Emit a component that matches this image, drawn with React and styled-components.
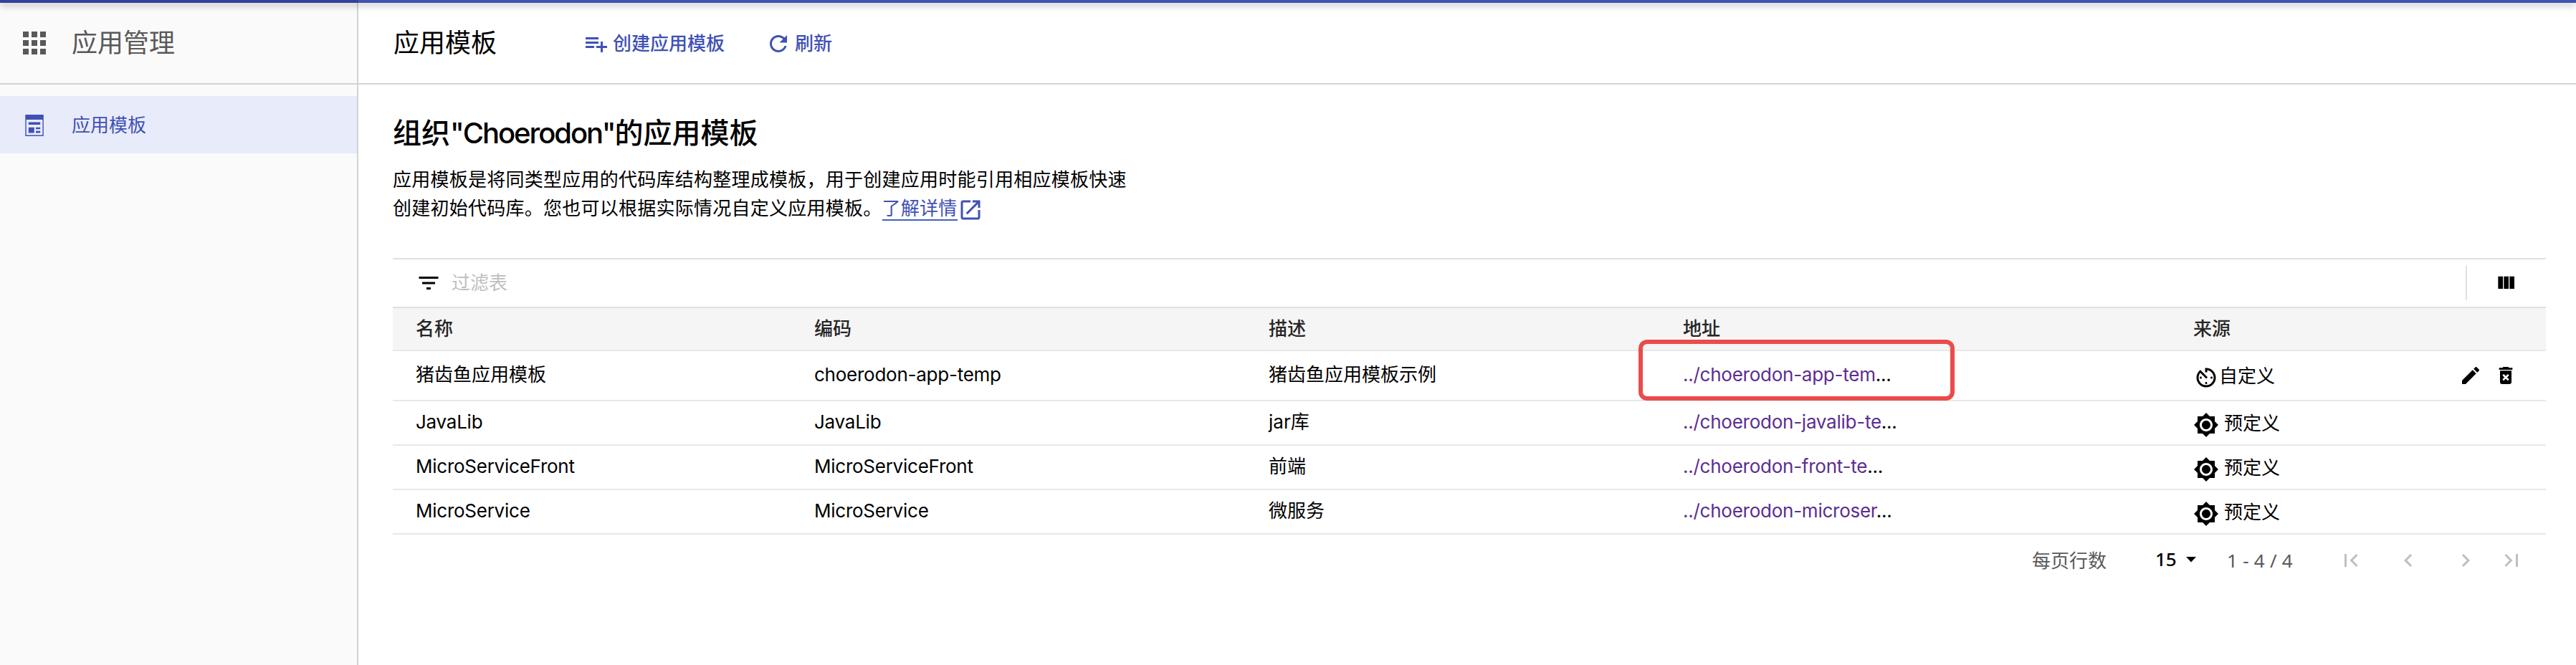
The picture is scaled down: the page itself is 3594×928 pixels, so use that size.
import React from 'react';
import styled, { createGlobalStyle } from 'styled-components';

const Global = createGlobalStyle`
  * { box-sizing: border-box; }
  html, body { margin: 0; padding: 0; background: #fff; }
  body {
    font-family: Inter, "Noto Sans CJK SC", sans-serif;
    font-size: 26px;
    line-height: 40px;
    color: #000;
    overflow: hidden;
  }
`;

const Page = styled.div`
  height: 928px;
  display: flex;
  flex-direction: column;
`;

const TopBar = styled.div`
  position: relative;
  z-index: 2;
  flex: none;
  height: 4px;
  background: linear-gradient(to right, #32419b 500px, #4052b0 500px);
  box-shadow: 0 4px 8px rgba(0, 0, 0, 0.3);
`;

const Body = styled.div`
  flex: 1;
  display: flex;
  min-height: 0;
`;

const Sidebar = styled.aside`
  width: 500px;
  flex: none;
  background: #fafafa;
  border-right: 2px solid #d3d3d3;
`;

const SidebarHeader = styled.div`
  height: 114px;
  padding-left: 24px;
  border-bottom: 2px solid #d3d3d3;
  display: flex;
  align-items: center;
  gap: 28px;
  font-size: 36px;
  color: #595959;
`;

const SidebarItem = styled.div`
  margin-top: 16px;
  height: 80px;
  padding: 2px 0 0 30px;
  background: #e8ebfa;
  color: #3f51b5;
  display: flex;
  align-items: center;
  gap: 34px;
`;

const Main = styled.main`
  flex: 1;
  min-width: 0;
`;

const PageHeader = styled.header`
  height: 114px;
  padding-left: 49px;
  border-bottom: 2px solid #d3d3d3;
  display: flex;
  align-items: center;
`;

const PageTitle = styled.h1`
  margin: 0 119px 0 0;
  width: 146px;
  white-space: nowrap;
  font-size: 36px;
  font-weight: 400;
`;

const HeaderButton = styled.button`
  border: 0;
  padding: 2px 0 0;
  margin-right: 57px;
  background: none;
  font: inherit;
  font-weight: 500;
  color: #3f51b5;
  display: flex;
  align-items: center;
  gap: 5px;
`;

const Content = styled.section`
  padding: 38px 42px 0 48px;
`;

const Heading = styled.h2`
  margin: 0;
  font-size: 40px;
  line-height: 60px;
  font-weight: 500;
`;

const HeadingLatin = styled.span`
  letter-spacing: -2.05px;
`;

const Description = styled.p`
  margin: 15px 0 0;
  letter-spacing: 0.25px;
`;

const Line = styled.span`
  display: flex;
  height: 40px;
`;

const LearnMore = styled.a`
  display: flex;
  color: #3f51b5;
`;

const LearnMoreText = styled.span`
  height: 37px;
  width: 105px;
  border-bottom: 2px solid #3f62bd;
`;

const LinkIcon = styled.span`
  padding-top: 4px;
`;

const FilterBar = styled.div`
  margin-top: 49px;
  height: 68px;
  border-top: 2px solid #e0e0e0;
  padding: 0 40px 0 32px;
  display: flex;
  align-items: center;
`;

const FilterPlaceholder = styled.span`
  flex: 1;
  margin-left: 14px;
  color: #bfbfbf;
`;

const ColumnButton = styled.span`
  height: 48px;
  padding-left: 38px;
  border-left: 2px solid #e0e0e0;
  display: flex;
  align-items: center;
`;

const Row = styled.div`
  display: grid;
  grid-template-columns: 556px 634px 578px 712px 1fr;
  height: ${(p) => p.$height || 62}px;
  border-bottom: 2px solid #e8e8e8;
  align-items: center;
`;

const HeadRow = styled(Row)`
  height: 62px;
  border-top: 2px solid #e0e0e0;
  background: #f5f5f5;
  color: #262626;
  font-weight: 500;
`;

const Cell = styled.div`
  padding-left: 32px;
  white-space: nowrap;
  display: flex;
  align-items: center;
`;

const TextCell = styled(Cell)`
  padding-bottom: 2px;
`;

const AddressCell = styled(TextCell)`
  position: relative;
`;

const Latin = styled.span`
  letter-spacing: -0.25px;
`;

const RepoLink = styled.a`
  color: #5c2d91;
`;

const Highlight = styled.span`
  position: absolute;
  left: -30px;
  top: -29px;
  width: 441px;
  height: 85px;
  border: 6px solid #ea4c4c;
  border-radius: 12px;
`;

const Source = styled.span`
  display: flex;
  align-items: center;
  gap: ${(p) => (p.$custom ? 0 : 7)}px;
`;

const SourceLabel = styled.span`
  padding-top: 1px;
`;

const SourceIcon = styled.span`
  display: flex;
  padding-top: 5px;
`;

const Actions = styled.span`
  flex: 1;
  display: flex;
  justify-content: flex-end;
  gap: 17px;
  padding-right: 40px;
`;

const Pagination = styled.footer`
  margin-top: 16px;
  height: 40px;
  padding-right: 30px;
  display: flex;
  align-items: center;
  justify-content: flex-end;
  font-family: "Noto Sans", "Noto Sans CJK SC", sans-serif;
  color: #595959;
`;

const PageSize = styled.span`
  width: 100px;
  height: 37px;
  line-height: 37px;
  margin: 0 0 3px 68px;
  display: flex;
  align-items: center;
  gap: 13px;
  color: #000;
  font-weight: 500;
`;

const PageRange = styled.span`
  width: 155px;
  white-space: nowrap;
  word-spacing: 0.5px;
`;

const Pager = styled.span`
  display: flex;
  margin-right: ${(p) => p.$gap || 0}px;
  color: #bfbfbf;
`;

const Svg = styled.svg`
  display: block;
  flex: none;
  fill: currentColor;
`;

const paths = {
  apps: 'M4 8h4V4H4v4zm6 12h4v-4h-4v4zm-6 0h4v-4H4v4zm0-6h4v-4H4v4zm6 0h4v-4h-4v4zm6-10v4h4V4h-4zm-6 4h4V4h-4v4zm6 6h4v-4h-4v4zm0 6h4v-4h-4v4z',
  playlistAdd: 'M14 10H2v2h12v-2zm0-4H2v2h12V6zm4 8v-4h-2v4h-4v2h4v4h2v-4h4v-2h-4zM2 16h8v-2H2v2z',
  refresh: 'M17.65 6.35C16.2 4.9 14.21 4 12 4c-4.42 0-7.99 3.58-7.99 8s3.57 8 7.99 8c3.73 0 6.84-2.55 7.73-6h-2.08c-.82 2.33-3.04 4-5.65 4-3.31 0-6-2.69-6-6s2.69-6 6-6c1.66 0 3.14.69 4.22 1.78L13 11h7V4l-2.35 2.35z',
  openInNew: 'M19 19H5V5h7V3H5c-1.11 0-2 .9-2 2v14c0 1.1.89 2 2 2h14c1.1 0 2-.9 2-2v-7h-2v7zM14 3v2h3.59l-9.83 9.83 1.41 1.41L19 6.41V10h2V3h-7z',
  filter: 'M10 18h4v-2h-4v2zM3 6v2h18V6H3zm3 7h12v-2H6v2z',
  columns: 'M10 18h5V5h-5v13zm-6 0h5V5H4v13zM16 5v13h5V5h-5z',
  timer: 'M11 17c0 .55.45 1 1 1s1-.45 1-1-.45-1-1-1-1 .45-1 1zm0-14v4h2V5.08c3.39.49 6 3.39 6 6.92 0 3.87-3.13 7-7 7s-7-3.13-7-7c0-1.68.59-3.22 1.58-4.42L12 13l1.41-1.41-6.8-6.8v.02C4.42 6.45 3 9.05 3 12c0 4.97 4.02 9 9 9 4.97 0 9-4.03 9-9s-4.03-9-9-9h-1zm7 9c0-.55-.45-1-1-1s-1 .45-1 1 .45 1 1 1 1-.45 1-1zM6 12c0 .55.45 1 1 1s1-.45 1-1-.45-1-1-1-1 .45-1 1z',
  brightness: 'M20 8.69V4h-4.69L12 .69 8.69 4H4v4.69L.69 12 4 15.31V20h4.69L12 23.31 15.31 20H20v-4.69L23.31 12 20 8.69zM12 18c-3.31 0-6-2.69-6-6s2.69-6 6-6 6 2.69 6 6-2.69 6-6 6zm0-10c-2.21 0-4 1.79-4 4s1.79 4 4 4 4-1.79 4-4-1.79-4-4-4z',
  edit: 'M3 17.25V21h3.75L17.81 9.94l-3.75-3.75L3 17.25zM20.71 7.04c.39-.39.39-1.02 0-1.41l-2.34-2.34c-.39-.39-1.02-.39-1.41 0l-1.83 1.83 3.75 3.75 1.83-1.83z',
  remove: 'M6 19c0 1.1.9 2 2 2h8c1.1 0 2-.9 2-2V7H6v12zm2.46-7.12l1.41-1.41L12 12.59l2.12-2.12 1.41 1.41L13.41 14l2.12 2.12-1.41 1.41L12 15.41l-2.12 2.12-1.41-1.41L10.59 14l-2.13-2.12zM15.5 4l-1-1h-5l-1 1H5v2h14V4z',
  first: 'M18.41 16.59L13.82 12l4.59-4.59L17 6l-6 6 6 6zM6 6h2v12H6z',
  prev: 'M15.41 7.41L14 6l-6 6 6 6 1.41-1.41L10.83 12z',
  next: 'M10 6L8.59 7.41 13.17 12l-4.58 4.59L10 18l6-6z',
  last: 'M5.59 7.41L10.18 12l-4.59 4.59L7 18l6-6-6-6zM16 6h2v12h-2z',
};

const Icon = ({ name, size = 36 }) => (
  <Svg width={size} height={size} viewBox="0 0 24 24">
    <path d={paths[name]} />
  </Svg>
);

const TemplateIcon = () => (
  <Svg width="36" height="36" viewBox="0 0 36 36">
    <path fillRule="evenodd" d="M5.3 3h25.5v30H5.3zM6.7 10v21.6h22.7V10z" />
    <path d="M9.8 13.4h16.4v3.6H9.8zM9.8 20.7h8v7.8h-8zM20 20.7h6.2v2.6H20zM20 25.7h6.2v2.8H20z" />
  </Svg>
);

const rows = [
  { name: '猪齿鱼应用模板', code: 'choerodon-app-temp', desc: '猪齿鱼应用模板示例', url: '../choerodon-app-tem', custom: true },
  { name: 'JavaLib', code: 'JavaLib', desc: 'jar库', url: '../choerodon-javalib-te' },
  { name: 'MicroServiceFront', code: 'MicroServiceFront', desc: '前端', url: '../choerodon-front-te' },
  { name: 'MicroService', code: 'MicroService', desc: '微服务', url: '../choerodon-microser' },
];

export default function App() {
  return (
    <Page>
      <Global />
      <TopBar />
      <Body>
        <Sidebar>
          <SidebarHeader>
            <Icon name="apps" size={48} />
            应用管理
          </SidebarHeader>
          <SidebarItem>
            <TemplateIcon />
            应用模板
          </SidebarItem>
        </Sidebar>
        <Main>
          <PageHeader>
            <PageTitle>应用模板</PageTitle>
            <HeaderButton>
              <Icon name="playlistAdd" />
              创建应用模板
            </HeaderButton>
            <HeaderButton>
              <Icon name="refresh" />
              刷新
            </HeaderButton>
          </PageHeader>
          <Content>
            <Heading>
              组织<HeadingLatin>"Choerodon"</HeadingLatin>的应用模板
            </Heading>
            <Description>
              <Line>应用模板是将同类型应用的代码库结构整理成模板，用于创建应用时能引用相应模板快速</Line>
              <Line>
                创建初始代码库。您也可以根据实际情况自定义应用模板。
                <LearnMore>
                  <LearnMoreText>了解详情</LearnMoreText>
                  <LinkIcon>
                    <Icon name="openInNew" />
                  </LinkIcon>
                </LearnMore>
              </Line>
            </Description>
            <FilterBar>
              <Icon name="filter" />
              <FilterPlaceholder>过滤表</FilterPlaceholder>
              <ColumnButton>
                <Icon name="columns" size={32} />
              </ColumnButton>
            </FilterBar>
            <HeadRow>
              <Cell>名称</Cell>
              <Cell>编码</Cell>
              <Cell>描述</Cell>
              <Cell>地址</Cell>
              <Cell>来源</Cell>
            </HeadRow>
            {rows.map((r) => (
              <Row key={r.name} $height={r.custom ? 70 : 62}>
                <TextCell>{r.custom ? r.name : <Latin>{r.name}</Latin>}</TextCell>
                <TextCell><Latin>{r.code}</Latin></TextCell>
                <TextCell>{r.desc}</TextCell>
                <AddressCell>
                  <Latin><RepoLink>{r.url}</RepoLink>...</Latin>
                  {r.custom && <Highlight />}
                </AddressCell>
                <Cell>
                  <Source $custom={r.custom}>
                    <SourceIcon>
                      <Icon name={r.custom ? 'timer' : 'brightness'} />
                    </SourceIcon>
                    <SourceLabel>{r.custom ? '自定义' : '预定义'}</SourceLabel>
                  </Source>
                  {r.custom && (
                    <Actions>
                      <Icon name="edit" size={32} />
                      <Icon name="remove" size={32} />
                    </Actions>
                  )}
                </Cell>
              </Row>
            ))}
            <Pagination>
              每页行数
              <PageSize>
                15
                <Svg width="14" height="8" viewBox="0 0 14 8">
                  <path d="M0 0h14L7 7.5z" />
                </Svg>
              </PageSize>
              <PageRange>1 - 4 / 4</PageRange>
              <Pager $gap={44}><Icon name="first" /></Pager>
              <Pager $gap={44}><Icon name="prev" /></Pager>
              <Pager $gap={28}><Icon name="next" /></Pager>
              <Pager><Icon name="last" /></Pager>
            </Pagination>
          </Content>
        </Main>
      </Body>
    </Page>
  );
}
